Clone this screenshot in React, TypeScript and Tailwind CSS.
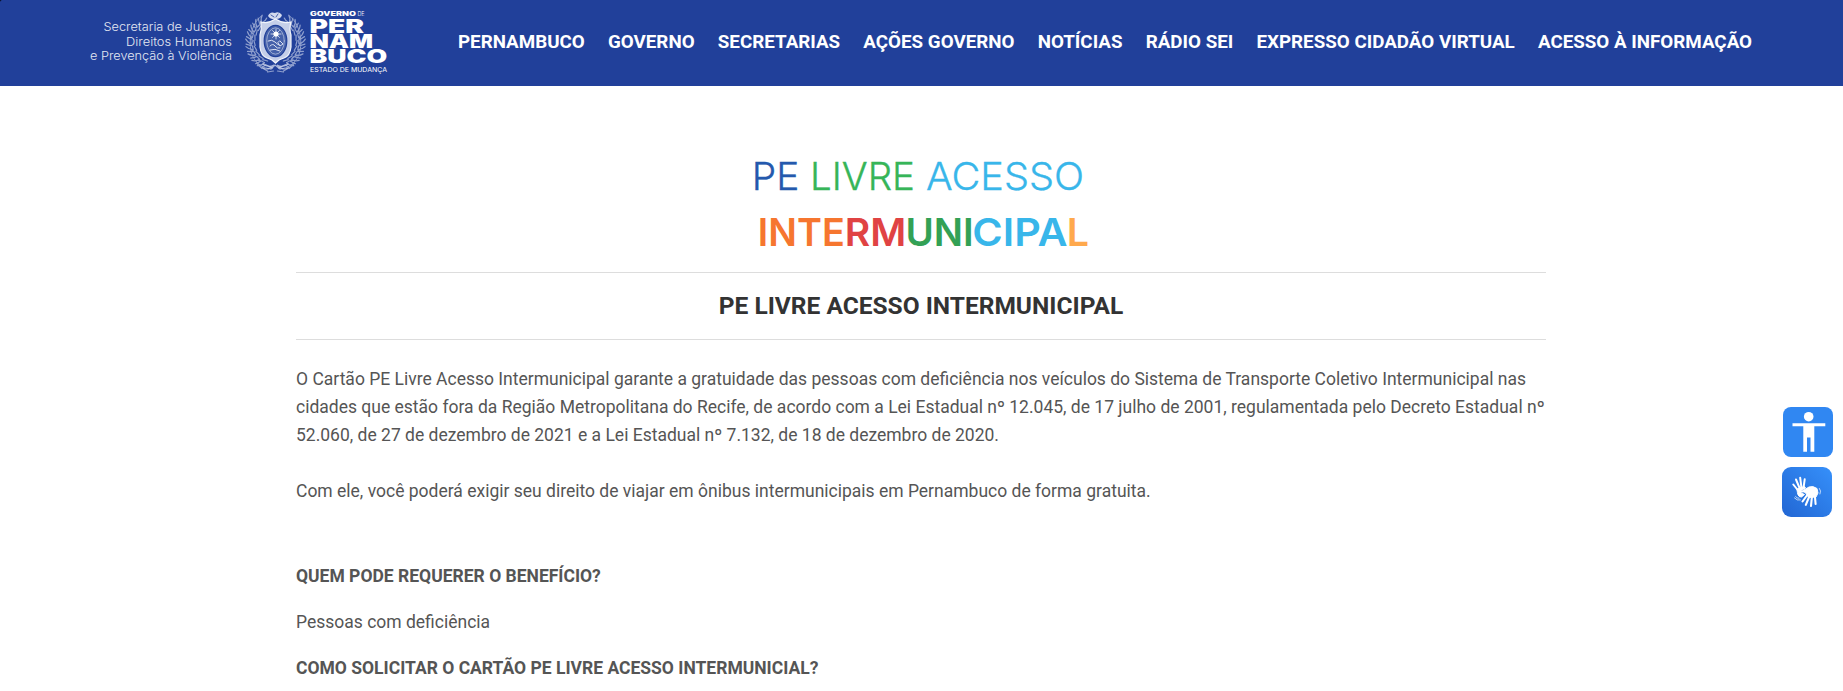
import React from "react";

const navItems = [
  "PERNAMBUCO",
  "GOVERNO",
  "SECRETARIAS",
  "AÇÕES GOVERNO",
  "NOTÍCIAS",
  "RÁDIO SEI",
  "EXPRESSO CIDADÃO VIRTUAL",
  "ACESSO À INFORMAÇÃO",
];

type Word = { t: string; x: number; y: number; w: number; s: number; weight: number; fill?: string };

function FittedText({ t, x, y, w, s, weight, fill = "#fff" }: Word) {
  return (
    <text x={x} y={y} textLength={w} lengthAdjust="spacingAndGlyphs" fontSize={s} fontWeight={weight} fill={fill}>
      {t}
    </text>
  );
}

const leaves = [0, 1, 2, 3, 4, 5, 6, 7, 8];

function Crest() {
  return (
    <g fill="none" stroke="#d3daee" strokeLinecap="round">
      {[-1, 1].map((side) => (
        <g key={side} transform={`translate(275.5 42) scale(${side} 1)`} strokeWidth="1.2" opacity="0.62">
          <path d="M5 27C20 25 27 12 25-4C24-13 20-22 14-26" strokeWidth="1" />
          {leaves.map((i) => (
            <g key={i} transform={`rotate(${62 - i * 14.5}) translate(23.5 0)`}>
              <path d="M0 0Q4-1 6-5M0 0Q-1-4 1-7M1 2L6 0M-3 2L-2-3" />
            </g>
          ))}
          <path d="M3 26l6-3M8 29l7-4M14 26l5-5M2 29l6 1" />
        </g>
      ))}
      <path d="M268 16q2-5 7-3q4-2 7 2q-1 4-6 4q-5 1-8-3Z" fill="#d3daee" stroke="none" />
      <path d="M271 15l3 2M278 14l-2 3" stroke="#21409a" strokeWidth="0.8" />
      <path
        d="M261 22Q268 24 275.500 19Q283 24 291 22Q289 29 291 35V47Q290 56 284 58Q279 59 275.500 63Q272 59 267 58Q261 56 260 47V35Q262 29 261 22Z"
        fill="#c5cfe9"
        stroke="#f1f4fb"
        strokeWidth="1.2"
      />
      <ellipse cx="275.5" cy="41" rx="11.3" ry="15.7" fill="#4561aa" stroke="#21409a" strokeWidth="1.2" />
      <ellipse cx="275.5" cy="41" rx="8.8" ry="13.2" stroke="#aebbdc" strokeWidth="0.8" />
      <circle cx="276" cy="34" r="2.6" fill="#fff" stroke="none" />
      <path d="M276 29v10M271 34h10M272.500 30.500l7 7M279.500 30.500l-7 7" stroke="#fff" strokeWidth="0.7" />
      <path d="M268 41q4-2 7 1t4 3M270 46q3-3 5 0t5 2M280 41l3 3-3 2-2-3ZM270 50q5-2 10 1" stroke="#dce2f2" strokeWidth="1" />
      <path d="M263 64q5 4 11 1q-6 6-11 3M288 64q-5 4-11 1q6 6 11 3M271 69l4-4 5 4" strokeWidth="1.2" opacity="0.75" />
    </g>
  );
}

function GovernmentLogo() {
  return (
    <svg width="310" height="80" viewBox="85 0 310 80" fontFamily="Inter, sans-serif" className="shrink-0">
      <g opacity="0.88">
        <FittedText t="Secretaria de Justiça," x={103.5} y={31} w={128} s={12} weight={300} />
        <FittedText t="Direitos Humanos" x={126} y={45.5} w={106} s={12} weight={300} />
        <FittedText t="e Prevenção à Violência" x={90} y={60} w={142} s={12} weight={300} />
      </g>
      <Crest />
      <FittedText t="GOVERNO" x={310} y={15.8} w={46} s={6} weight={900} />
      <FittedText t="DE" x={357.5} y={15.8} w={7} s={6} weight={300} />
      <FittedText t="PER" x={309.5} y={32.8} w={54.5} s={18.6} weight={900} />
      <FittedText t="NAM" x={309.5} y={48.2} w={63.5} s={18.6} weight={900} />
      <FittedText t="BUCO" x={309.5} y={63.2} w={77.8} s={18.6} weight={900} />
      <FittedText t="ESTADO DE MUDANÇA" x={310} y={72} w={77} s={6.8} weight={400} />
    </svg>
  );
}

function ProgramLogo() {
  return (
    <svg width="345" height="112" viewBox="748 144 345 112" fontFamily="Inter, sans-serif" role="img">
      <g strokeWidth="0.35">
        <g stroke="#2459ad">
          <FittedText t="PE" x={750.8} y={189.7} w={47.5} s={38.7} weight={300} fill="#2459ad" />
        </g>
        <g stroke="#36b558">
          <FittedText t="LIVRE" x={809} y={189.7} w={105} s={38.7} weight={300} fill="#36b558" />
        </g>
        <g stroke="#38b6ea">
          <FittedText t="ACESSO" x={925} y={189.7} w={158} s={38.7} weight={300} fill="#38b6ea" />
        </g>
      </g>
      <FittedText t="INTE" x={756.8} y={246} w={87} s={38.7} weight={600} fill="#f6762f" />
      <FittedText t="RM" x={843.8} y={246} w={61.5} s={38.7} weight={600} fill="#e04343" />
      <FittedText t="UNI" x={904.5} y={246} w={68.3} s={38.7} weight={600} fill="#33a155" />
      <FittedText t="CIPA" x={971.3} y={246} w={95.3} s={38.7} weight={600} fill="#38b6ea" />
      <FittedText t="L" x={1065.8} y={246} w={22.3} s={38.7} weight={600} fill="#ffa94d" />
    </svg>
  );
}

function AccessibilityButtons() {
  return (
    <div className="fixed top-[407px] right-[10px] flex flex-col gap-[10px]">
      <button aria-label="Acessibilidade" className="ml-px h-[50px] w-[50px] rounded-[8px] bg-[#3087f2]">
        <svg viewBox="0 0 50 50" fill="#fff">
          <circle cx="25.7" cy="9.7" r="4.8" />
          <path d="M9.500 16.300H42.300V19.300H31.300V44.700H27.500V30.500H24V44.700H20.300V19.300H9.500Z" />
        </svg>
      </button>
      <button aria-label="Libras" className="h-[50px] w-[50px] rounded-[9px] bg-linear-to-tr from-[#2266d3] to-[#3690fa]">
        <svg viewBox="0 0 50 50" fill="none" stroke="#fff" strokeLinecap="round" strokeLinejoin="round">
          <path d="M11.300 17.500L16.500 24M14 12.500L18 22M18.200 10.800L19.500 21M22.700 12.300L21.500 21" strokeWidth="2" />
          <path d="M15.300 22L22.500 19.500L23.500 21L19 23.500L19 26L22.500 27.500L19.500 30Q16 30 15.500 26Z" fill="#fff" strokeWidth="1" />
          <path d="M21 23.500L27 20Q31 18.500 35 21.500L36 26L34 30L26.500 30.500L24.500 27Z" fill="#fff" strokeWidth="1" />
          <path d="M26 27L20.500 34.500M27.500 29L23.800 37.800M30 29L29 39M32.800 28L33.600 37" strokeWidth="2.1" />
          <path d="M20 24.500L26 24" strokeWidth="2.2" />
          <path d="M37.500 21.500Q39.500 24 38 27M12.500 31Q15 34 18.500 33M13.500 29.500Q15 31.500 17 31.300" strokeWidth="0.9" opacity="0.8" />
        </svg>
      </button>
    </div>
  );
}

export default function App() {
  return (
    <div className="h-[691px] overflow-hidden bg-white font-[Roboto,sans-serif] text-[17.5px] leading-[28px] text-[#555]">
      <svg className="absolute top-0 left-0" width="3" height="3" viewBox="0 0 3 3">
        <path d="M0 0H2Q0 0 0 2Z" fill="#000" />
      </svg>
      <header className="flex h-[86px] items-start bg-[#21409a] pl-[85px]">
        <GovernmentLogo />
        <nav className="ml-[63px] flex h-[83px] items-center gap-[23.2px] text-[18.8px] font-bold whitespace-nowrap text-white">
          {navItems.map((item) => (
            <a key={item} href="#">
              {item}
            </a>
          ))}
        </nav>
      </header>

      <main className="ml-[296px] w-[1250px]">
        <div className="flex h-[186px] items-end justify-center pb-[16px]">
          <ProgramLogo />
        </div>
        <h1 className="flex h-[68px] items-center justify-center border-y border-[#ddd] text-[24.5px] font-bold text-[#333]">
          PE LIVRE ACESSO INTERMUNICIPAL
        </h1>
        <p className="mt-[25px]">
          O Cartão PE Livre Acesso Intermunicipal garante a gratuidade das pessoas com deficiência nos veículos do
          Sistema de Transporte Coletivo Intermunicipal nas
          <br />
          <span className="whitespace-nowrap">
            cidades que estão fora da Região Metropolitana do Recife, de acordo com a Lei Estadual nº 12.045, de 17
            julho de 2001, regulamentada pelo Decreto Estadual nº
          </span>
          <br />
          52.060, de 27 de dezembro de 2021 e a Lei Estadual nº 7.132, de 18 de dezembro de 2020.
        </p>
        <p className="mt-[28px]">
          Com ele, você poderá exigir seu direito de viajar em ônibus intermunicipais em Pernambuco de forma gratuita.
        </p>
        <h2 className="mt-[57px] font-bold">QUEM PODE REQUERER O BENEFÍCIO?</h2>
        <p className="mt-[18px]">Pessoas com deficiência</p>
        <h2 className="mt-[18px] font-bold">COMO SOLICITAR O CARTÃO PE LIVRE ACESSO INTERMUNICIAL?</h2>
      </main>

      <AccessibilityButtons />
    </div>
  );
}
